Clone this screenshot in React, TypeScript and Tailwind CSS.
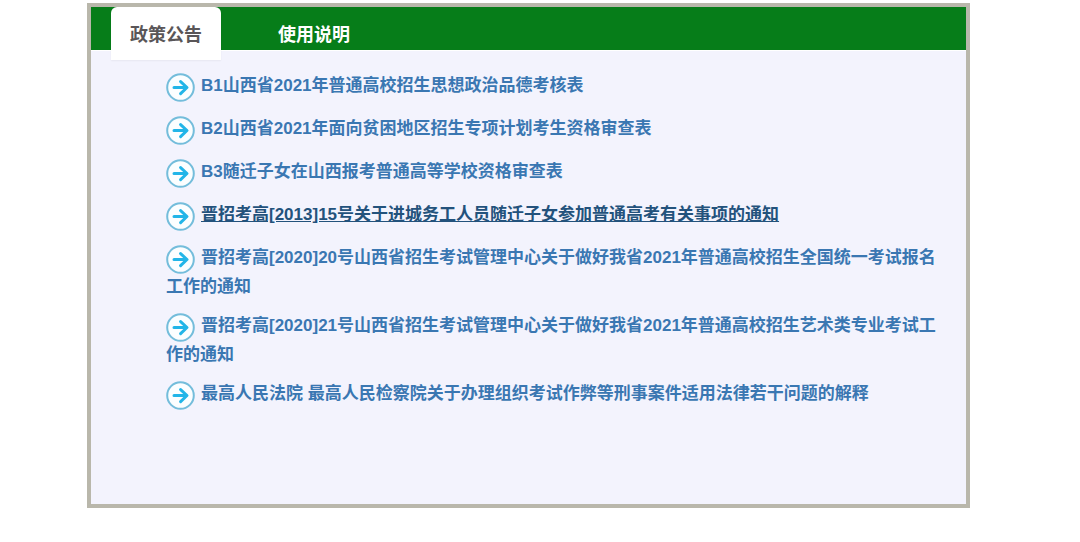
import React, { useState } from 'react';

interface Notice {
  id: number;
  title: string;
  active?: boolean;
}

const TABS = ['政策公告', '使用说明'];

const NOTICES: Notice[] = [
  { id: 1, title: 'B1山西省2021年普通高校招生思想政治品德考核表' },
  { id: 2, title: 'B2山西省2021年面向贫困地区招生专项计划考生资格审查表' },
  { id: 3, title: 'B3随迁子女在山西报考普通高等学校资格审查表' },
  { id: 4, title: '晋招考高[2013]15号关于进城务工人员随迁子女参加普通高考有关事项的通知', active: true },
  { id: 5, title: '晋招考高[2020]20号山西省招生考试管理中心关于做好我省2021年普通高校招生全国统一考试报名工作的通知' },
  { id: 6, title: '晋招考高[2020]21号山西省招生考试管理中心关于做好我省2021年普通高校招生艺术类专业考试工作的通知' },
  { id: 7, title: '最高人民法院 最高人民检察院关于办理组织考试作弊等刑事案件适用法律若干问题的解释' },
];

const ArrowIcon: React.FC = () => (
  <svg viewBox="0 0 29 29" className="inline-block w-[29px] h-[29px] mr-1.5 align-top" fill="none" aria-hidden="true">
    <circle cx="14.5" cy="14.5" r="13.3" fill="#fbfeff" stroke="#74bddb" strokeWidth="2" />
    <path
      d="M8 14.5H20.5M14.6 8.6L21 14.5L14.6 20.6"
      stroke="#22b5e8"
      strokeWidth="3"
      strokeLinecap="round"
      strokeLinejoin="round"
    />
  </svg>
);

const App: React.FC = () => {
  const [tab, setTab] = useState(TABS[0]);

  return (
    <main className="bg-white pt-[3px] pl-[87px] pr-[110px] pb-8 font-['Liberation_Sans','Noto_Sans_CJK_SC',sans-serif] font-bold">
      <section className="border-4 border-[#b9b7ab] bg-[#f3f3fd]">
        <div className="flex h-[43px] items-start bg-[#067d19] px-5">
          {TABS.map((name) => (
            <button
              key={name}
              type="button"
              onClick={() => setTab(name)}
              className={
                name === tab
                  ? 'h-[53px] w-[110px] shrink-0 rounded-t-md bg-white pt-0.5 text-lg text-[#5a5658] shadow-xs'
                  : 'ml-[38px] h-[53px] w-[110px] shrink-0 pt-0.5 text-lg text-white'
              }
            >
              {name}
            </button>
          ))}
        </div>
        <ul className="min-h-[454px] border-t border-white pt-[22px] pl-[75px] pr-4">
          {NOTICES.map((notice) => (
            <li key={notice.id} className="mb-3.5 text-[17px] leading-[25px]">
              <ArrowIcon />
              <a
                href="#"
                className={
                  notice.active
                    ? 'text-[#23527c] underline'
                    : 'text-[#3a77b2] hover:text-[#23527c] hover:underline'
                }
              >
                {notice.title}
              </a>
            </li>
          ))}
        </ul>
      </section>
    </main>
  );
};

export default App;
